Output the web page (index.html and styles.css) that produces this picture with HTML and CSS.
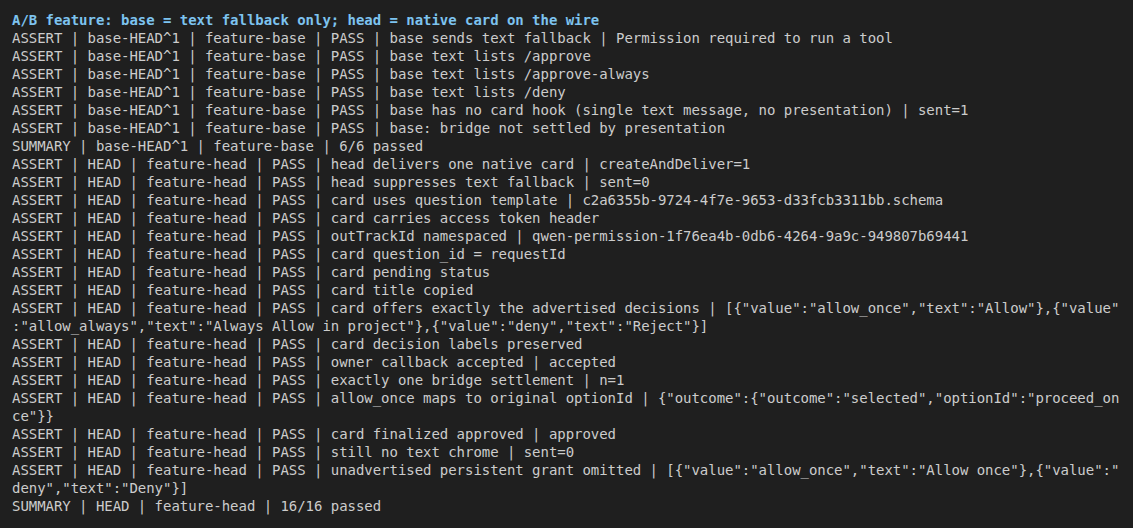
FILE: index.html
```html
<!DOCTYPE html>
<html>
<head>
<meta charset="utf-8">
<link rel="stylesheet" href="styles.css">
</head>
<body>
<pre class="term"><span class="title">A/B feature: base = text fallback only; head = native card on the wire</span>
ASSERT | base-HEAD^1 | feature-base | PASS | base sends text fallback | Permission required to run a tool
ASSERT | base-HEAD^1 | feature-base | PASS | base text lists /approve
ASSERT | base-HEAD^1 | feature-base | PASS | base text lists /approve-always
ASSERT | base-HEAD^1 | feature-base | PASS | base text lists /deny
ASSERT | base-HEAD^1 | feature-base | PASS | base has no card hook (single text message, no presentation) | sent=1
ASSERT | base-HEAD^1 | feature-base | PASS | base: bridge not settled by presentation
SUMMARY | base-HEAD^1 | feature-base | 6/6 passed
ASSERT | HEAD | feature-head | PASS | head delivers one native card | createAndDeliver=1
ASSERT | HEAD | feature-head | PASS | head suppresses text fallback | sent=0
ASSERT | HEAD | feature-head | PASS | card uses question template | c2a6355b-9724-4f7e-9653-d33fcb3311bb.schema
ASSERT | HEAD | feature-head | PASS | card carries access token header
ASSERT | HEAD | feature-head | PASS | outTrackId namespaced | qwen-permission-1f76ea4b-0db6-4264-9a9c-949807b69441
ASSERT | HEAD | feature-head | PASS | card question_id = requestId
ASSERT | HEAD | feature-head | PASS | card pending status
ASSERT | HEAD | feature-head | PASS | card title copied
ASSERT | HEAD | feature-head | PASS | card offers exactly the advertised decisions | [{"value":"allow_once","text":"Allow"},{"value"
:"allow_always","text":"Always Allow in project"},{"value":"deny","text":"Reject"}]
ASSERT | HEAD | feature-head | PASS | card decision labels preserved
ASSERT | HEAD | feature-head | PASS | owner callback accepted | accepted
ASSERT | HEAD | feature-head | PASS | exactly one bridge settlement | n=1
ASSERT | HEAD | feature-head | PASS | allow_once maps to original optionId | {"outcome":{"outcome":"selected","optionId":"proceed_on
ce"}}
ASSERT | HEAD | feature-head | PASS | card finalized approved | approved
ASSERT | HEAD | feature-head | PASS | still no text chrome | sent=0
ASSERT | HEAD | feature-head | PASS | unadvertised persistent grant omitted | [{"value":"allow_once","text":"Allow once"},{"value":"
deny","text":"Deny"}]
SUMMARY | HEAD | feature-head | 16/16 passed</pre>
</body>
</html>
```

FILE: styles.css
```css
html, body {
  margin: 0;
  padding: 0;
  background: #1f1f1f;
  height: 100%;
}

.term {
  margin: 0;
  padding: 11px 12px;
  font-family: "DejaVu Sans Mono", monospace;
  font-size: 14px;
  line-height: 18px;
  letter-spacing: -0.04px;
  color: #cccccc;
  white-space: pre;
}

.title {
  color: #7dc3ef;
  font-weight: bold;
}
```
